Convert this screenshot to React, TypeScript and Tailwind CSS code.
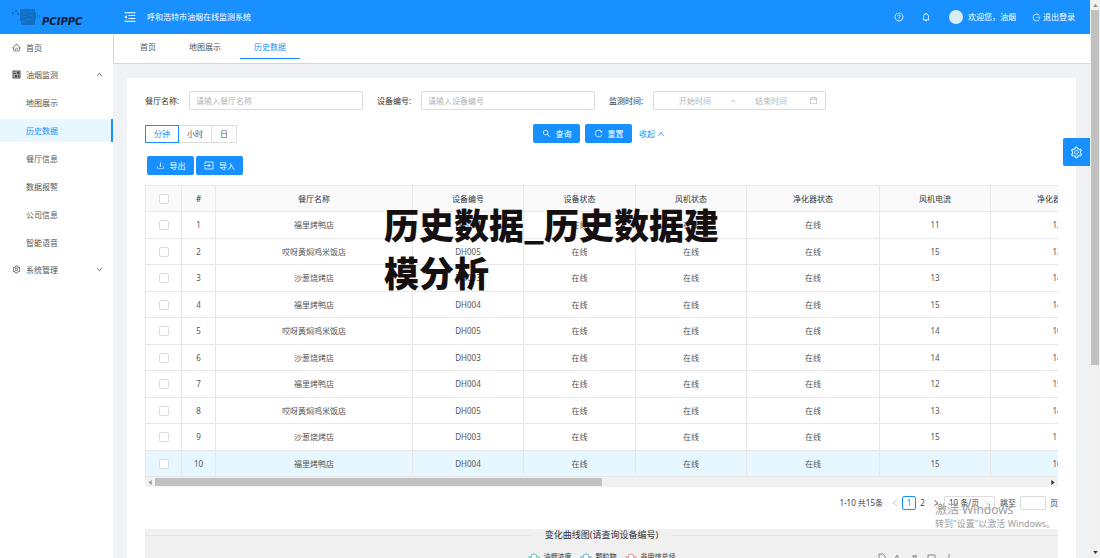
import React, { useState } from "react";
import {
  AiOutlineBell,
  AiOutlineCalendar,
  AiOutlineDown,
  AiOutlineDownload,
  AiOutlineHome,
  AiOutlineLeft,
  AiOutlineLogout,
  AiOutlineMenuFold,
  AiOutlineQuestionCircle,
  AiOutlineReload,
  AiOutlineRight,
  AiOutlineSearch,
  AiOutlineSetting,
  AiOutlineUp,
} from "react-icons/ai";

interface DeviceRecord {
  id: number;
  restaurant: string;
  device: string;
  fanCurrent: number;
  purifierCurrent: number;
}

const records: DeviceRecord[] = [
  { id: 1, restaurant: "福里烤鸭店", device: "DH004", fanCurrent: 11, purifierCurrent: 12 },
  { id: 2, restaurant: "哎呀黄焖鸡米饭店", device: "DH005", fanCurrent: 15, purifierCurrent: 12 },
  { id: 3, restaurant: "沙葱烧烤店", device: "DH003", fanCurrent: 13, purifierCurrent: 14 },
  { id: 4, restaurant: "福里烤鸭店", device: "DH004", fanCurrent: 15, purifierCurrent: 14 },
  { id: 5, restaurant: "哎呀黄焖鸡米饭店", device: "DH005", fanCurrent: 14, purifierCurrent: 16 },
  { id: 6, restaurant: "沙葱烧烤店", device: "DH003", fanCurrent: 14, purifierCurrent: 14 },
  { id: 7, restaurant: "福里烤鸭店", device: "DH004", fanCurrent: 12, purifierCurrent: 15 },
  { id: 8, restaurant: "哎呀黄焖鸡米饭店", device: "DH005", fanCurrent: 13, purifierCurrent: 14 },
  { id: 9, restaurant: "沙葱烧烤店", device: "DH003", fanCurrent: 15, purifierCurrent: 11 },
  { id: 10, restaurant: "福里烤鸭店", device: "DH004", fanCurrent: 15, purifierCurrent: 16 },
];

const headers = [
  "餐厅名称",
  "设备编号",
  "设备状态",
  "风机状态",
  "净化器状态",
  "风机电流",
  "净化器电流",
];

const monitorItems = ["地图展示", "历史数据", "餐厅信息", "数据报警", "公司信息", "智能语音"];

const cell = "border-r border-b border-[#e8e8e8] p-0 text-center";
const primaryButton =
  "flex h-[19px] w-[47px] items-center justify-center gap-[5px] rounded-xs bg-[#1890ff] text-white";
const textInput =
  "h-[19px] w-[174px] rounded-xs border border-[#dcdcdc] bg-white px-[6px] outline-none placeholder:text-[#b5b5b5]";

const Logo = () => (
  <div className="flex w-[113px] shrink-0 items-center pl-3">
    <svg viewBox="0 0 30 18" className="h-[18px] w-[30px]" aria-hidden="true">
      <g fill="#1170c4">
        <path d="M8 1h15v3h1v9h-1v4H9v-4H8z" />
        <path d="M0 4h2v2H0zM3 2h2v2H3zM5 5h2v2H5zM25 6h1v4h-1zM27 7h1v3h-1z" />
      </g>
      <path
        d="M10 4h4v1h-4zM16 3h5v1h-5zM11 8h3v1h-3zM17 7h4v1h-4zM13 11h6v1h-6zM10 13h2v1h-2z"
        fill="#1d7dd6"
      />
    </svg>
    <span className="pt-[9px] font-['DejaVu_Sans'] text-[10px] leading-3 font-bold text-[#0a1a33] italic">
      PCIPPC
    </span>
  </div>
);

const ImportIcon = () => (
  <svg viewBox="0 0 10 9" className="h-[9px] w-[10px]" fill="none" stroke="currentColor" aria-hidden="true">
    <path d="M1 3V1h8v7H1V6M0 4.500h6M4.500 3l1.500 1.500L4.500 6" strokeWidth="0.800" />
  </svg>
);

const Header = () => (
  <header className="flex h-[34px] shrink-0 items-center bg-[#1890ff] text-white">
    <Logo />
    <button className="ml-[10px]" aria-label="收起菜单">
      <AiOutlineMenuFold className="size-[14px]" />
    </button>
    <h1 className="ml-[10px] flex-1">呼和浩特市油烟在线监测系统</h1>
    <div className="flex items-center pr-[15px]">
      <button aria-label="帮助">
        <AiOutlineQuestionCircle className="size-[10px]" />
      </button>
      <button className="ml-[17px]" aria-label="通知">
        <AiOutlineBell className="size-[10px]" />
      </button>
      <span className="ml-[18px] size-[14px] rounded-full bg-[#dcecf5]" />
      <span className="ml-[5px]">欢迎您，油烟</span>
      <button className="ml-4 flex items-center gap-[2px]">
        <AiOutlineLogout className="size-[9px]" />
        退出登录
      </button>
    </div>
  </header>
);

const Sidebar = () => (
  <nav className="w-[113px] shrink-0 bg-white pt-[2px] text-[#555]">
    <ul className="flex flex-col gap-1">
      <li>
        <a href="#home" className="flex h-[23px] items-center gap-[5px] pl-3">
          <AiOutlineHome className="size-[9px]" />
          首页
        </a>
      </li>
      <li>
        <button className="flex h-[23px] w-full items-center gap-[5px] pr-[10px] pl-3">
          <svg viewBox="0 0 9 9" className="size-[9px]" aria-hidden="true">
            <rect x="1" y="1" width="7" height="7" fill="#aaa" stroke="#555" />
            <path d="M2 3h2v1H2zM5 2h2v2H5zM3 5h2v2H3zM6 5h1v2H6z" fill="#444" />
          </svg>
          <span className="flex-1 text-left">油烟监测</span>
          <AiOutlineUp className="size-[7px]" />
        </button>
        <ul className="mt-[5px] flex flex-col gap-[5px]">
          {monitorItems.map((item) => (
            <li key={item}>
              <a
                href="#monitor"
                className={`flex h-[23px] items-center pl-[26px] ${
                  item === "历史数据" ? "border-r-2 border-[#1890ff] bg-[#e6f7ff] text-[#1890ff]" : ""
                }`}
              >
                {item}
              </a>
            </li>
          ))}
        </ul>
      </li>
      <li>
        <button className="flex h-[23px] w-full items-center gap-[5px] pr-[10px] pl-3">
          <AiOutlineSetting className="size-[9px]" />
          <span className="flex-1 text-left">系统管理</span>
          <AiOutlineDown className="size-[7px]" />
        </button>
      </li>
    </ul>
  </nav>
);

const TabBar = () => (
  <div className="flex h-[30px] items-start gap-[5px] border-b border-l border-[#d4d6d9] bg-white pl-3 text-[#555]">
    <a href="#home" className="h-[25px] px-[14px] leading-[26px]">
      首页
    </a>
    <a href="#map" className="h-[25px] px-[14px] leading-[26px]">
      地图展示
    </a>
    <a
      href="#history"
      className="h-[25px] border-b border-[#1890ff] px-[14px] leading-[26px] text-[#1890ff]"
    >
      历史数据
    </a>
  </div>
);

const Filters = () => {
  const [unit, setUnit] = useState("分钟");

  return (
    <form onSubmit={(e) => e.preventDefault()}>
      <div className="flex items-center">
        <label htmlFor="restaurant" className="w-[44px] text-[#333]">
          餐厅名称:
        </label>
        <input id="restaurant" className={textInput} placeholder="请输入餐厅名称" />
        <label htmlFor="device" className="ml-[14px] w-[44px] text-[#333]">
          设备编号:
        </label>
        <input id="device" className={textInput} placeholder="请输入设备编号" />
        <label htmlFor="start" className="ml-[14px] w-[44px] text-[#333]">
          监测时间:
        </label>
        <div className="flex h-[19px] w-[173px] items-center rounded-xs border border-[#dcdcdc] pr-[7px] pl-[6px] text-[#b5b5b5]">
          <input
            id="start"
            className="w-[70px] text-center outline-none placeholder:text-[#b5b5b5]"
            placeholder="开始时间"
          />
          <span className="w-[6px] text-center">~</span>
          <input
            aria-label="结束时间"
            className="w-[70px] text-center outline-none placeholder:text-[#b5b5b5]"
            placeholder="结束时间"
          />
          <AiOutlineCalendar className="ml-auto size-[9px]" />
        </div>
      </div>

      {/* Time unit + query actions */}
      <div className="mt-[14px] flex items-center">
        <div className="flex w-[388px]">
          {["分钟", "小时", "日"].map((item) => (
            <button
              key={item}
              type="button"
              onClick={() => setUnit(item)}
              className={`h-[18px] border px-2 ${
                item === unit ? "border-[#1890ff] text-[#1890ff]" : "border-l-0 border-[#dcdcdc] text-[#555]"
              }`}
            >
              {item}
            </button>
          ))}
        </div>
        <button type="submit" className={primaryButton}>
          <AiOutlineSearch className="size-[9px]" />
          查询
        </button>
        <button type="reset" className={`${primaryButton} ml-[5px]`}>
          <AiOutlineReload className="size-[9px]" />
          重置
        </button>
        <button type="button" className="ml-[7px] flex items-center gap-[2px] text-[#1890ff]">
          收起
          <AiOutlineUp className="size-[8px]" />
        </button>
      </div>
    </form>
  );
};

const CheckBox = ({ label }: { label: string }) => (
  <input
    type="checkbox"
    aria-label={label}
    className="mx-auto block size-[10px] appearance-none rounded-xs border border-[#dcdcdc] bg-white"
  />
);

const HistoryTable = () => (
  <div>
    <div className="overflow-hidden">
      <table className="w-full min-w-[978px] table-fixed border-separate border-spacing-0 border-t border-l border-[#e8e8e8]">
        <colgroup>
          <col className="w-[36px]" />
          <col className="w-[34px]" />
          <col className="w-[197px]" />
          <col className="w-[111px]" />
          <col className="w-[112px]" />
          <col className="w-[111px]" />
          <col className="w-[133px]" />
          <col className="w-[111px]" />
          <col className="w-[133px]" />
        </colgroup>
        <thead>
          <tr className="h-[26px] bg-[#fafafa] text-[#333]">
            <th className={cell}>
              <CheckBox label="全选" />
            </th>
            <th className={`${cell} font-normal`}>#</th>
            {headers.map((header) => (
              <th key={header} className={`${cell} font-normal`}>
                {header}
              </th>
            ))}
          </tr>
        </thead>
        <tbody className="text-[#555]">
          {records.map((record) => (
            <tr
              key={record.id}
              className={`odd:h-[27px] even:h-[26px] ${record.id === 10 ? "bg-[#e6f7ff]" : ""}`}
            >
              <td className={cell}>
                <CheckBox label={`选择第${record.id}行`} />
              </td>
              <td className={cell}>{record.id}</td>
              <td className={cell}>{record.restaurant}</td>
              <td className={cell}>{record.device}</td>
              <td className={cell}>在线</td>
              <td className={cell}>在线</td>
              <td className={cell}>在线</td>
              <td className={cell}>{record.fanCurrent}</td>
              <td className={cell}>{record.purifierCurrent}</td>
            </tr>
          ))}
        </tbody>
      </table>
    </div>

    {/* Horizontal scroll bar */}
    <div className="flex h-[10px] items-center bg-[#f1f1f1] px-[3px]">
      <svg viewBox="0 0 4 6" className="h-[5px] w-[4px]" aria-hidden="true">
        <path d="M4 0v6L0 3z" fill="#999" />
      </svg>
      <div className="mx-[3px] flex-1">
        <div className="h-[8px] w-1/2 bg-[#c1c1c1]" />
      </div>
      <svg viewBox="0 0 4 6" className="h-[5px] w-[4px]" aria-hidden="true">
        <path d="M0 0v6l4-3z" fill="#333" />
      </svg>
    </div>
  </div>
);

const Pagination = () => (
  <div className="mt-[9px] flex h-[14px] items-center justify-end text-[#444]">
    <span>1-10 共15条</span>
    <button className="ml-2 text-[#bbb]" aria-label="上一页">
      <AiOutlineLeft className="size-[8px]" />
    </button>
    <button className="ml-[3px] h-[14px] w-[14px] rounded-xs border border-[#1890ff] text-[#1890ff]">
      1
    </button>
    <button className="w-[13px]">2</button>
    <button className="ml-[3px]" aria-label="下一页">
      <AiOutlineRight className="size-[8px]" />
    </button>
    <div className="ml-1 flex h-[14px] w-[51px] items-center rounded-xs border border-[#dcdcdc] pr-[3px] pl-1">
      <select aria-label="每页条数" className="min-w-0 flex-1 appearance-none outline-none">
        <option>10 条/页</option>
        <option>20 条/页</option>
      </select>
      <AiOutlineDown className="size-[7px] text-[#bbb]" />
    </div>
    <label htmlFor="jump" className="ml-[5px]">
      跳至
    </label>
    <input
      id="jump"
      className="mx-[4px] h-[14px] w-[26px] rounded-xs border border-[#dcdcdc] outline-none"
    />
    <span>页</span>
  </div>
);

const LegendItem = ({ color, label }: { color: string; label: string }) => (
  <span className="flex items-center gap-1">
    <svg viewBox="0 0 12 8" className="h-[8px] w-[12px]" aria-hidden="true">
      <path d="M0 4h12" stroke={color} />
      <circle cx="6" cy="4" r="3" fill="#fff" stroke={color} />
    </svg>
    {label}
  </span>
);

const ChartPanel = () => (
  <section className="mt-[19px] h-[200px] bg-[#f0f0f0]">
    <div className="flex items-center gap-[13px]">
      <hr className="flex-1 border-[#e4e4e4]" />
      <h2 className="text-[9px] leading-3 text-[#333]">变化曲线图(请查询设备编号)</h2>
      <hr className="flex-1 border-[#e4e4e4]" />
    </div>
    <div className="mt-[10px] grid grid-cols-[1fr_auto_1fr] items-center text-[7px] leading-3 text-[#333]">
      <div className="col-start-2 flex gap-2">
        <LegendItem color="#5fc5c0" label="油烟浓度" />
        <LegendItem color="#6aaee0" label="颗粒物" />
        <LegendItem color="#e88c8c" label="非甲烷总烃" />
      </div>
      <svg
        viewBox="0 0 76 9"
        className="mr-[104px] h-[9px] w-[76px] justify-self-end"
        fill="none"
        stroke="#888"
        aria-hidden="true"
      >
        <path d="M1 1h4l2 2v5H1zM16 8l3-6 3 6M32 8l6-6v6M34 3h4M50 2h7v6M50 2v4M71 1v6M68 5l3 3 3-3" />
      </svg>
    </div>
  </section>
);

const PageScrollbar = () => (
  <div className="flex w-[10px] shrink-0 flex-col items-center bg-[#f1f1f1] py-1">
    <svg viewBox="0 0 6 4" className="h-[3px] w-[5px]" aria-hidden="true">
      <path d="M0 4h6L3 0z" fill="#888" />
    </svg>
    <div className="my-[3px] w-[8px] flex-1">
      <div className="h-[66%] bg-[#c1c1c1]" />
    </div>
    <svg viewBox="0 0 6 4" className="h-[3px] w-[5px]" aria-hidden="true">
      <path d="M0 0h6L3 4z" fill="#333" />
    </svg>
  </div>
);

export default function App() {
  return (
    <div className="relative flex h-screen overflow-hidden bg-white font-['Noto_Sans','Noto_Sans_CJK_SC',sans-serif] text-[8px] leading-3">
      <div className="flex min-w-0 flex-1 flex-col">
        <Header />
        <div className="flex min-h-0 flex-1">
          <Sidebar />
          <main className="min-w-0 flex-1 overflow-hidden bg-[#f0f2f5]">
            <TabBar />
            <div className="mx-[14px] mt-[14px] bg-white px-[18px] pt-[13px]">
              <Filters />
              <div className="mt-[13px] mb-[10px] ml-[2px] flex gap-[2px]">
                <button className={primaryButton}>
                  <AiOutlineDownload className="size-[9px]" />
                  导出
                </button>
                <button className={primaryButton}>
                  <ImportIcon />
                  导入
                </button>
              </div>
              <HistoryTable />
              <Pagination />
              <ChartPanel />
            </div>
          </main>
        </div>
      </div>
      <PageScrollbar />

      {/* Settings drawer handle */}
      <button
        className="absolute top-[138px] right-[10px] flex h-[28px] w-[27px] items-center justify-center rounded-l-xs bg-[#1890ff] text-white"
        aria-label="设置"
      >
        <AiOutlineSetting className="size-[13px]" />
      </button>

      {/* Caption over the page */}
      <p className="pointer-events-none absolute top-[200px] left-[384px] w-[350px] font-['Noto_Sans_CJK_SC',sans-serif] text-[35px] leading-[48px] font-black break-all text-[#15100f]">
        历史数据_历史数据建模分析
      </p>

      {/* System activation notice */}
      <div className="pointer-events-none absolute top-[503px] left-[935px] text-[#a0a0a0]">
        <p className="text-[12px] leading-[14px]">激活 Windows</p>
        <p className="text-[9px] leading-[14px]">转到"设置"以激活 Windows。</p>
      </div>
    </div>
  );
}
